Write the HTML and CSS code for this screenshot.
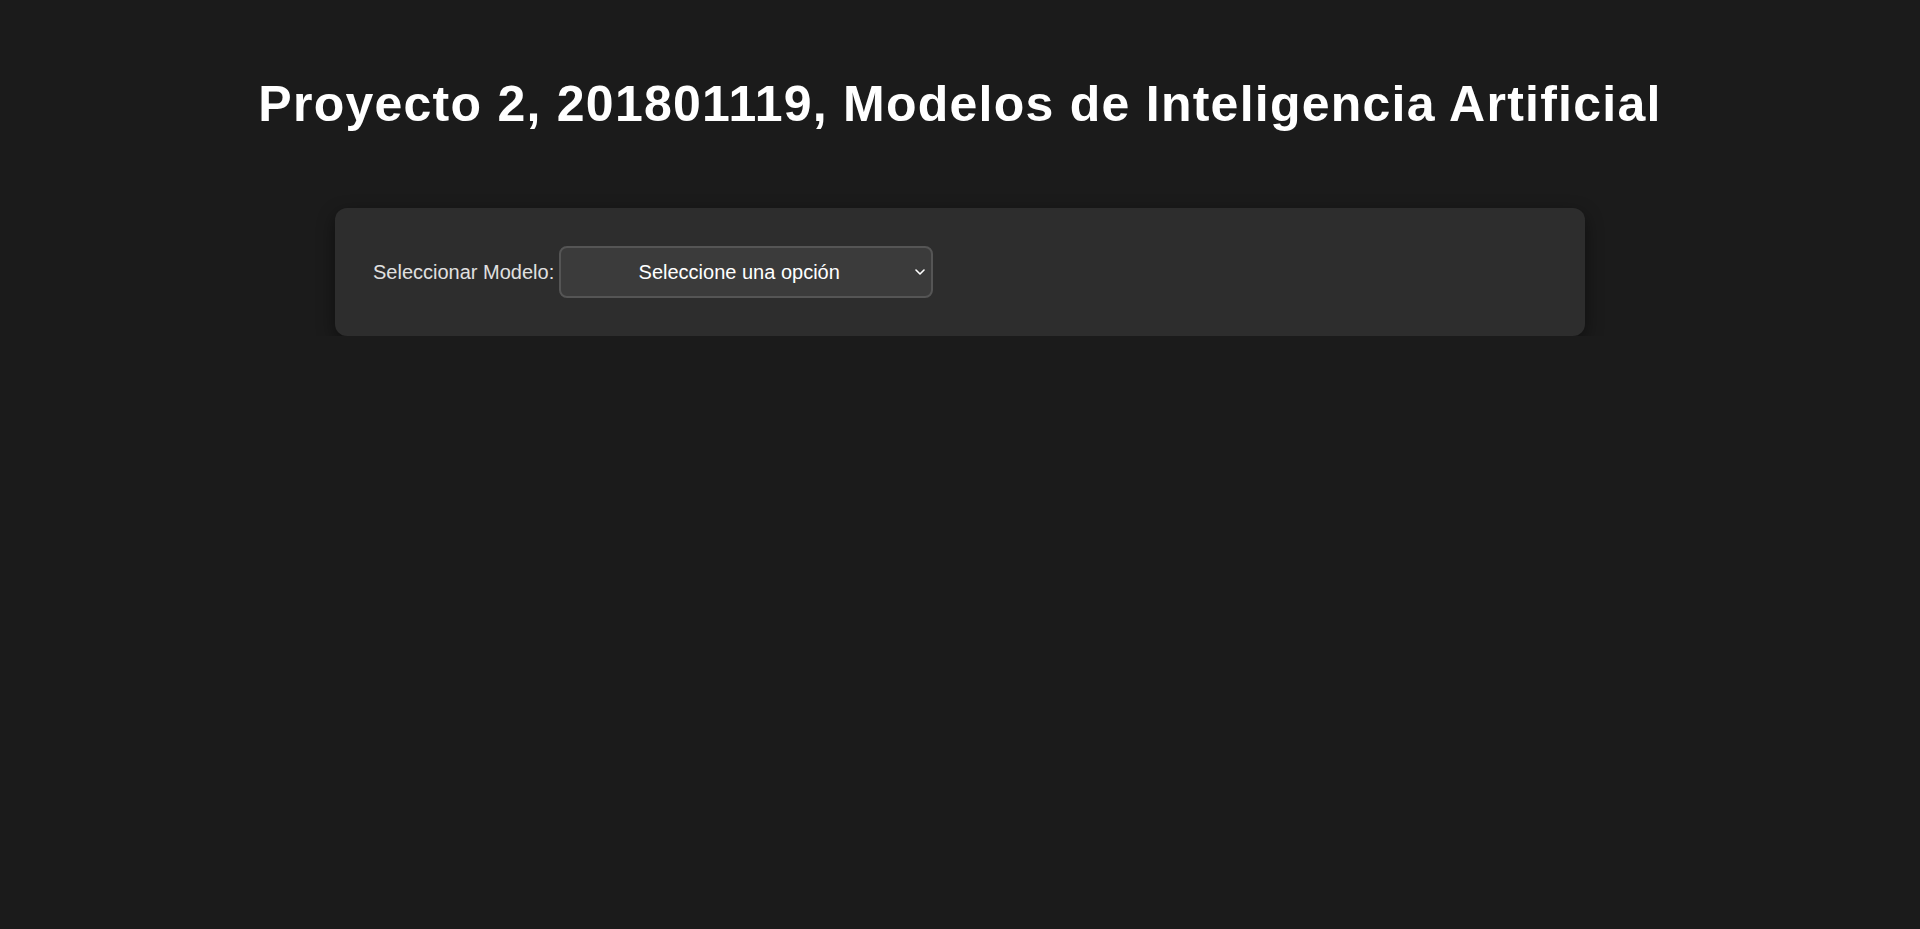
FILE: index.html
```html
<!DOCTYPE html>
<html lang="es">
<head>
<meta charset="utf-8">
<title>Proyecto 2</title>
<link rel="stylesheet" href="styles.css">
</head>
<body>
<h1 class="title">Proyecto 2, 201801119, Modelos de Inteligencia Artificial</h1>
<div class="card">
  <div class="field">
    <label class="field-label" for="modelo">Seleccionar Modelo:</label>
    <div class="select-wrap">
      <select id="modelo" class="select">
        <option>Seleccione una opción</option>
      </select>
      <svg class="chev" width="10" height="6" viewBox="0 0 10 6"><path d="M1 1l4 4 4-4" fill="none" stroke="#fff" stroke-width="1.6" stroke-linecap="round" stroke-linejoin="round"/></svg>
    </div>
  </div>
</div>
</body>
</html>
```

FILE: styles.css
```css
html, body {
  margin: 0;
  padding: 0;
  background: #1b1b1b;
  font-family: "Liberation Sans", Arial, sans-serif;
  color: #fff;
}
body {
  padding-top: 77px;
}
.title {
  margin: 0 0 76px 0;
  text-align: center;
  font-size: 50px;
  line-height: 55px;
  font-weight: bold;
  letter-spacing: 1.25px;
  color: #fff;
}
.card {
  width: 1250px;
  box-sizing: border-box;
  margin: 0 auto;
  background: #2d2d2d;
  border-radius: 12px;
  padding: 38px 38px;
  box-shadow: 0 6px 18px rgba(0,0,0,0.45);
}
.field {
  display: flex;
  align-items: center;
  gap: 5px;
}
.field-label {
  font-size: 20px;
  color: #e0e0e0;
}
.select-wrap {
  position: relative;
  width: 374px;
  height: 52px;
}
.select {
  width: 100%;
  height: 100%;
  box-sizing: border-box;
  appearance: none;
  -webkit-appearance: none;
  background: #3b3b3b;
  border: 2px solid #555;
  border-radius: 8px;
  color: #fff;
  font-family: "Liberation Sans", Arial, sans-serif;
  font-size: 20px;
  text-align: center;
  text-align-last: center;
  padding: 0 24px 0 10px;
}
.chev {
  position: absolute;
  right: 8px;
  top: 23px;
  pointer-events: none;
}
```
